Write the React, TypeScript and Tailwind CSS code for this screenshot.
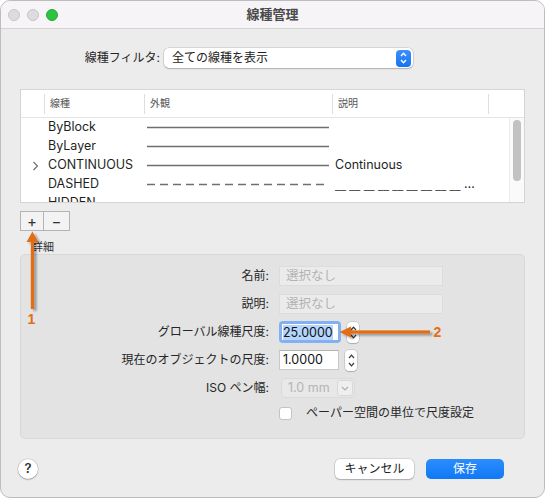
import React from "react";

const FONT = "font-['Inter','Noto_Sans_CJK_JP',sans-serif]";

const ROWS = [
  { name: "ByBlock", line: "solid", desc: "" },
  { name: "ByLayer", line: "solid", desc: "" },
  { name: "CONTINUOUS", line: "solid", desc: "Continuous", chevron: true },
  { name: "DASHED", line: "dashed", desc: "__ __ __ __ __ __ __ __ __ __ __ __" },
  { name: "HIDDEN", line: "dashed", desc: "" },
];

function Stepper() {
  return (
    <div className="ml-[6px] flex h-[21px] w-[12px] flex-col items-center justify-center gap-[3px] rounded-[4px] bg-white shadow-[0_0_0_0.5px_rgba(0,0,0,0.2),0_1px_1px_rgba(0,0,0,0.15)]">
      <svg width="7" height="5" viewBox="0 0 7 5">
        <path d="M1 4 L3.5 1.2 L6 4" fill="none" stroke="#3a3a3a" strokeWidth="1.2" />
      </svg>
      <svg width="7" height="5" viewBox="0 0 7 5">
        <path d="M1 1 L3.5 3.8 L6 1" fill="none" stroke="#3a3a3a" strokeWidth="1.2" />
      </svg>
    </div>
  );
}

function FormRow({ label, children }: { label: string; children: React.ReactNode }) {
  return (
    <div className="flex h-[28px] items-center">
      <div className="w-[248px] text-right text-[12px] text-[#262626]">{label}</div>
      <div className="ml-[10px] flex items-center">{children}</div>
    </div>
  );
}

export default function App() {
  return (
    <div className={`relative h-[498px] w-[545px] bg-white ${FONT}`}>
      <div className="flex h-full w-full flex-col overflow-hidden rounded-[10px] border border-[#bdbdbd] bg-[#ececec]">
        {/* Title bar */}
        <div className="grid h-[28px] shrink-0 grid-cols-3 items-center border-b border-[#d3d3d3] bg-[#f6f4f6]">
          <div className="flex items-center gap-[7px] pl-[7px]">
            <span className="h-[12px] w-[12px] rounded-full border border-[#c6c5c7] bg-[#dcdbdd]" />
            <span className="h-[12px] w-[12px] rounded-full border border-[#c6c5c7] bg-[#dcdbdd]" />
            <span className="h-[12px] w-[12px] rounded-full border border-[#22a93a] bg-[#2cc340]" />
          </div>
          <div className="text-center text-[13px] font-semibold text-[#4a4a4a]">線種管理</div>
          <div />
        </div>

        <div className="flex flex-1 flex-col px-[19px]">
          {/* Filter */}
          <div className="mt-[19px] flex h-[20px] items-center">
            <div className="w-[140px] text-right text-[12px] text-[#262626]">線種フィルタ:</div>
            <div className="ml-[4px] flex h-[20px] w-[249px] items-center justify-between rounded-[5px] bg-white pl-[8px] pr-[2px] shadow-[0_0_0_0.5px_rgba(0,0,0,0.18),0_1px_1.5px_rgba(0,0,0,0.18)]">
              <span className="text-[12px] text-[#222]">全ての線種を表示</span>
              <div className="flex h-[17px] w-[15px] flex-col items-center justify-center gap-[2px] rounded-[4px] bg-gradient-to-b from-[#3d8ffb] to-[#1572f5]">
                <svg width="7" height="5" viewBox="0 0 7 5">
                  <path d="M1 4 L3.5 1.3 L6 4" fill="none" stroke="white" strokeWidth="1.3" />
                </svg>
                <svg width="7" height="5" viewBox="0 0 7 5">
                  <path d="M1 1 L3.5 3.7 L6 1" fill="none" stroke="white" strokeWidth="1.3" />
                </svg>
              </div>
            </div>
          </div>

          {/* Table */}
          <div className="mt-[21px] flex h-[114px] flex-col border border-[#d4d4d4] bg-white">
            <div className="flex h-[28px] shrink-0 items-center border-b border-[#e4e4e4] text-[10px] text-[#555]">
              <div className="w-[23px]" />
              {[
                { t: "線種", w: "w-[100px]" },
                { t: "外観", w: "w-[188px]" },
                { t: "説明", w: "w-[156px]" },
                { t: "", w: "w-[20px]" },
              ].map((c, i) => (
                <div key={i} className={`flex h-full items-center ${c.w}`}>
                  <div className="h-[20px] w-px bg-[#dedede]" />
                  <span className="pl-[5px]">{c.t}</span>
                </div>
              ))}
            </div>
            <div className="flex min-h-0 flex-1">
              <div className="flex-1 overflow-hidden">
                {ROWS.map((r) => (
                  <div key={r.name} className="flex h-[19px] shrink-0 items-center text-[12.5px] text-[#1f1f1f]">
                    <div className="flex w-[23px] justify-end pr-[5px]">
                      {r.chevron && (
                        <svg width="7" height="10" viewBox="0 0 7 10">
                          <path d="M1.5 1 L5.5 5 L1.5 9" fill="none" stroke="#6a6a6a" strokeWidth="1.1" />
                        </svg>
                      )}
                    </div>
                    <div className="w-[100px] pl-[4px]">{r.name}</div>
                    <div className="flex w-[188px] items-center pl-[3px]">
                      <svg width="182" height="4" viewBox="0 0 182 4">
                        <line
                          x1="0"
                          y1="1.5"
                          x2="182"
                          y2="1.5"
                          stroke="#6f6f6f"
                          strokeWidth="1.4"
                          strokeDasharray={r.line === "dashed" ? "8 5" : undefined}
                        />
                      </svg>
                    </div>
                    <div className="w-[143px] overflow-hidden text-ellipsis whitespace-nowrap pl-[3px]">
                      {r.line === "dashed" && r.desc ? (
                        <span className="relative top-[2px] text-[12px] text-[#555]">{r.desc}</span>
                      ) : (
                        r.desc
                      )}
                    </div>
                  </div>
                ))}
              </div>
              <div className="w-[15px] shrink-0 border-l border-[#ececec] bg-[#fafafa]">
                <div className="mx-auto mt-[2px] h-[61px] w-[8px] rounded-full bg-[#c2c2c2]" />
              </div>
            </div>
          </div>

          {/* + / - */}
          <div className="mt-[8px] flex h-[20px]">
            <div className="flex w-[24px] items-center justify-center border border-[#b3b3b3] bg-[#f3f3f3] text-[15px] leading-none text-[#333]">+</div>
            <div className="flex w-[26px] items-center justify-center border border-l-0 border-[#b3b3b3] bg-[#f3f3f3] text-[15px] leading-none text-[#333]">−</div>
          </div>

          <div className="mt-[9px] h-[14px] pl-[12px] text-[11px] leading-[14px] text-[#333]">詳細</div>

          {/* Details group */}
          <div className="h-[185px] rounded-[5px] border border-[#d7d7d7] bg-[#e3e3e3] pt-[7px]">
            <FormRow label="名前:">
              <div className="flex h-[20px] w-[164px] items-center border border-[#dcdcdc] bg-[#ebebeb] pl-[6px] text-[12.5px] text-[#b3b3b3]">選択なし</div>
            </FormRow>
            <FormRow label="説明:">
              <div className="flex h-[20px] w-[164px] items-center border border-[#dcdcdc] bg-[#ebebeb] pl-[6px] text-[12.5px] text-[#b3b3b3]">選択なし</div>
            </FormRow>
            <FormRow label="グローバル線種尺度:">
              <div className="h-[22px] w-[62px] rounded-[4px] bg-[#82b0f3] p-[3px]">
                <div className="flex h-full w-full items-center bg-white pl-[1px]">
                  <span className="bg-[#b4d5fe] text-[12.5px] leading-[15px] text-[#111]">25.0000</span>
                </div>
              </div>
              <Stepper />
            </FormRow>
            <FormRow label="現在のオブジェクトの尺度:">
              <div className="flex h-[20px] w-[60px] items-center border border-[#c9c9c9] border-t-[#b5b5b5] bg-white pl-[3px] text-[12.5px] text-[#111]">1.0000</div>
              <Stepper />
            </FormRow>
            <FormRow label="ISO ペン幅:">
              <div className="ml-[2px] flex h-[20px] w-[74px] items-center justify-between rounded-[4px] border border-[#dadada] bg-[#e8e8e8] pl-[6px] pr-[1px]">
                <span className="text-[12.5px] text-[#b5b5b5]">1.0 mm</span>
                <div className="flex h-[16px] w-[16px] items-center justify-center rounded-[3px] border border-[#d8d8d8] bg-[#efefef]">
                  <svg width="8" height="5" viewBox="0 0 8 5">
                    <path d="M1 1 L4 4 L7 1" fill="none" stroke="#b0b0b0" strokeWidth="1.2" />
                  </svg>
                </div>
              </div>
            </FormRow>
            <div className="flex h-[22px] items-center">
              <div className="ml-[258px] h-[13px] w-[13px] rounded-[3px] border border-[#c3c3c3] bg-white" />
              <span className="ml-[14px] text-[12px] text-[#262626]">ペーパー空間の単位で尺度設定</span>
            </div>
          </div>

          {/* Bottom buttons */}
          <div className="mt-[20px] flex h-[20px] items-center">
            <div className="-ml-[2px] flex h-[20px] w-[20px] items-center justify-center rounded-full bg-white text-[13px] font-semibold text-[#333] shadow-[0_0_0_0.5px_rgba(0,0,0,0.2),0_1px_1.5px_rgba(0,0,0,0.2)]">?</div>
            <div className="flex-1" />
            <div className="flex h-[20px] w-[79px] items-center justify-center rounded-[5px] bg-white text-[12px] text-[#222] shadow-[0_0_0_0.5px_rgba(0,0,0,0.2),0_1px_1.5px_rgba(0,0,0,0.2)]">キャンセル</div>
            <div className="ml-[12px] mr-[21px] flex h-[20px] w-[78px] items-center justify-center rounded-[5px] bg-gradient-to-b from-[#2b8cfc] to-[#0f78f7] text-[12px] text-white">保存</div>
          </div>
        </div>
      </div>

      {/* Callout arrows */}
      <svg className="pointer-events-none absolute left-0 top-0" width="545" height="498" viewBox="0 0 545 498">
        <defs>
          <filter id="sh" x="-50%" y="-50%" width="200%" height="200%">
            <feDropShadow dx="2.5" dy="2" stdDeviation="1.2" floodColor="#000" floodOpacity="0.35" />
          </filter>
        </defs>
        <g filter="url(#sh)" fill="#e36d14">
          <rect x="30.8" y="240" width="3.2" height="69" />
          <polygon points="32.4,231.5 26.5,242 38.3,242" />
          <rect x="348" y="330.4" width="82" height="3.2" />
          <polygon points="339.5,332 351,326.5 351,337.5" />
        </g>
        <text x="31.5" y="324" textAnchor="middle" fontSize="14" fontWeight="700" fill="#e36d14" fontFamily="Liberation Sans, sans-serif">1</text>
        <text x="437.5" y="337" textAnchor="middle" fontSize="14" fontWeight="700" fill="#e36d14" fontFamily="Liberation Sans, sans-serif">2</text>
      </svg>
    </div>
  );
}
